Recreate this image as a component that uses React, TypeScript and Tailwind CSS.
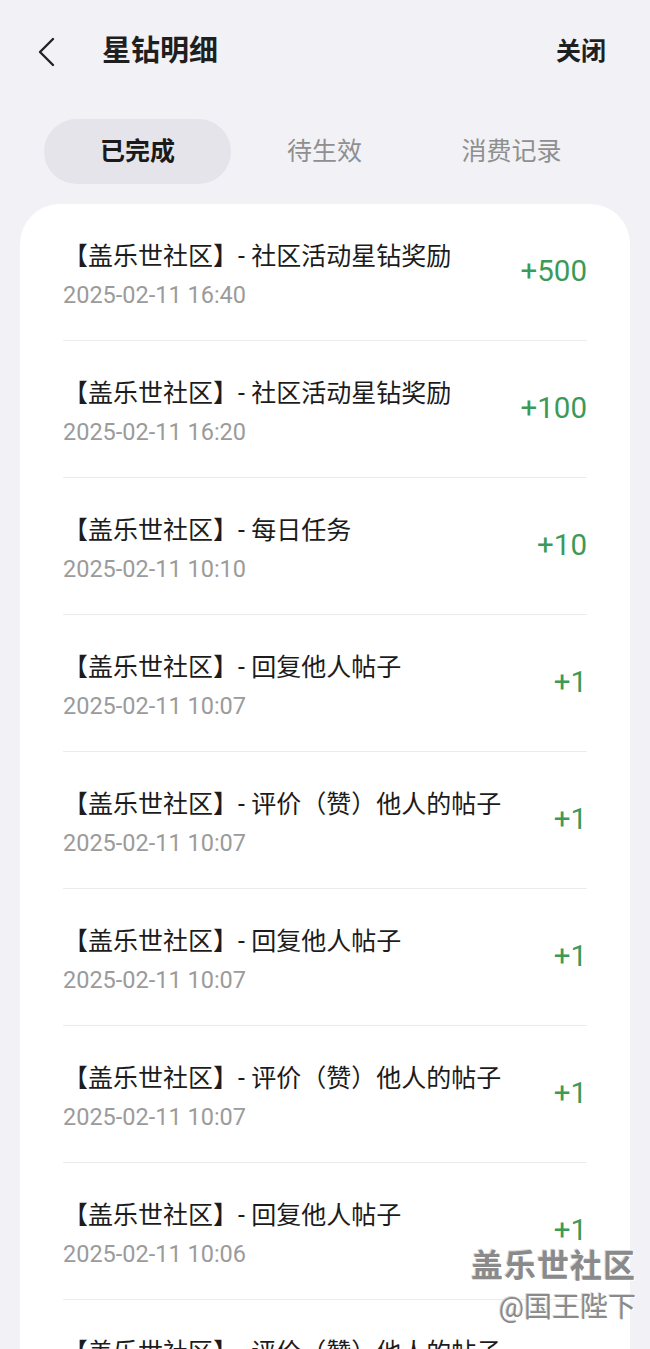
import React from 'react';

interface Record {
  title: string;
  time: string;
  amount: string;
}

const records: Record[] = [
  { title: '社区活动星钻奖励', time: '2025-02-11 16:40', amount: '+500' },
  { title: '社区活动星钻奖励', time: '2025-02-11 16:20', amount: '+100' },
  { title: '每日任务', time: '2025-02-11 10:10', amount: '+10' },
  { title: '回复他人帖子', time: '2025-02-11 10:07', amount: '+1' },
  { title: '评价（赞）他人的帖子', time: '2025-02-11 10:07', amount: '+1' },
  { title: '回复他人帖子', time: '2025-02-11 10:07', amount: '+1' },
  { title: '评价（赞）他人的帖子', time: '2025-02-11 10:07', amount: '+1' },
  { title: '回复他人帖子', time: '2025-02-11 10:06', amount: '+1' },
  { title: '评价（赞）他人的帖子', time: '2025-02-11 10:06', amount: '+1' },
];

const tabs = ['已完成', '待生效', '消费记录'];

function Row({ r, last }: { r: Record; last: boolean }) {
  return (
    <div className={`flex h-[137px] items-center justify-between ${last ? '' : 'border-b border-[#ececee]'}`}>
      <div className="self-start pt-[37px]">
        <div className="text-[25px] leading-[32px] text-[#1c1c1c]">【盖乐世社区】- {r.title}</div>
        <div className="mt-[6px] text-[23.5px] leading-[32px] text-[#9b9b9b]">{r.time}</div>
      </div>
      <div className="text-[29.5px] leading-none text-[#3b9a57]">{r.amount}</div>
    </div>
  );
}

export default function App() {
  return (
    <div className="relative h-[1349px] overflow-hidden bg-[#f2f2f6] font-['Roboto','Noto_Sans_CJK_SC',sans-serif]">
      {/* header */}
      <div className="flex h-[104px] items-center pl-[36px] pr-[44px]">
        <svg width="20" height="30" viewBox="0 0 20 30" className="shrink-0">
          <polyline points="17,2 4,15 17,28" fill="none" stroke="#222" strokeWidth="2.4" strokeLinecap="round" strokeLinejoin="round" />
        </svg>
        <div className="ml-[46px] text-[29px] font-bold text-[#1f1f1f]">星钻明细</div>
        <div className="ml-auto text-[25px] font-bold text-[#1f1f1f]">关闭</div>
      </div>

      {/* tabs */}
      <div className="mt-[15px] flex px-[44px]">
        {tabs.map((t, i) => (
          <div
            key={t}
            className={`flex h-[65px] w-[187px] items-center justify-center rounded-full text-[25px] ${
              i === 0 ? 'bg-[#e4e4ea] font-bold text-[#1a1a1a]' : 'text-[#8f8f8f]'
            }`}
          >
            {t}
          </div>
        ))}
      </div>

      {/* list */}
      <div className="mx-[20px] mt-[20px] rounded-[40px] bg-white px-[43px]">
        {records.map((r, i) => (
          <Row key={i} r={r} last={i === records.length - 1} />
        ))}
      </div>

      {/* watermark */}
      <div className="pointer-events-none absolute right-[14px] top-[1244px] flex flex-col items-end text-[#8a8a8a] [text-shadow:1px_1px_0_#ffffff,-1px_-1px_0_#d8d8d8]">
        <div className="text-[32px] font-bold leading-[44px] tracking-[1px]">盖乐世社区</div>
        <div className="text-[28px] leading-[40px]">@国王陛下</div>
      </div>
    </div>
  );
}
